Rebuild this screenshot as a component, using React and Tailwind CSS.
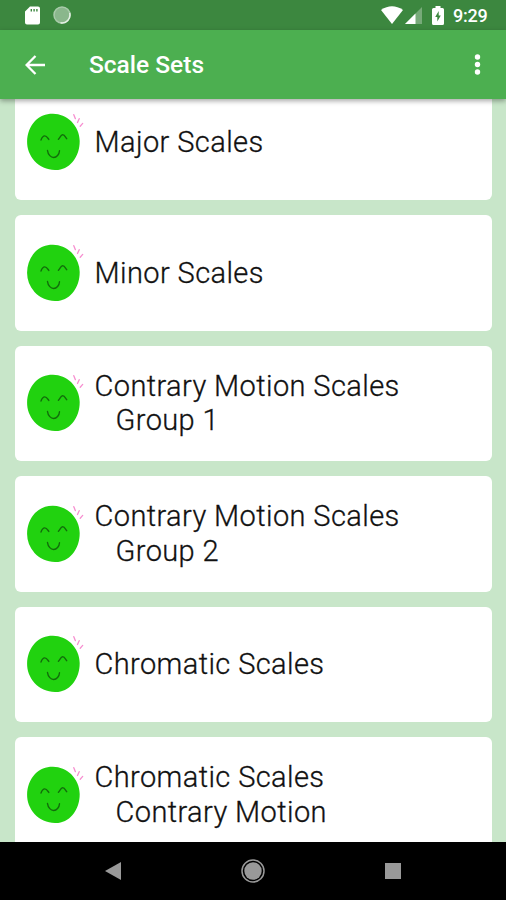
import React from "react";

const scaleSets = [
  { title: "Major Scales" },
  { title: "Minor Scales" },
  { title: "Contrary Motion Scales", subtitle: "Group 1" },
  { title: "Contrary Motion Scales", subtitle: "Group 2" },
  { title: "Chromatic Scales" },
  { title: "Chromatic Scales", subtitle: "Contrary Motion" },
];

const HappyFace = () => {
  return (
    <svg className="w-[60px] h-[60px] shrink-0" viewBox="0 0 60 60" fill="none">
      <path
        d="M27 1.700C34 1.800 40 4.500 45 9C50.500 14.500 53.600 21.500 53.700 29C53.700 37 51.500 44 46.500 50C42 55.500 36 58.200 29 58C21 57.800 13.500 54.500 8.500 49C3.500 43 1 36.500 1.100 29.500C1.200 22 3.800 14.500 9 9C14 4 20 1.600 27 1.700Z"
        fill="#21d20f"
      />
      <g stroke="#126c0b" strokeWidth="1.400" strokeLinecap="round" strokeLinejoin="round">
        <path d="M15 28C16 25.300 17.200 23.900 18.700 23.900C20.600 23.900 21.500 25.700 22.800 27.400" />
        <path d="M32.400 27.300C33.800 26 34.800 22.700 36.700 22.600C38.500 22.600 39.500 25 40.700 26.700" />
        <path d="M21.500 38.500C22 42.800 25 45.500 27.700 45.500C30.500 45.400 33.300 42.500 33.500 38.800" />
      </g>
      <g stroke="#f78fd0" strokeWidth="1.300" strokeLinecap="round">
        <path d="M47.800 2.700L49.400 6.700" />
        <path d="M53.200 6.700L51.500 10.500" />
        <path d="M56.700 11.400L54.200 14.200" />
      </g>
    </svg>
  );
};

const StatusBar = () => {
  return (
    <div className="flex h-[30px] items-center justify-between bg-[#3c873f] pl-[23px] pr-[18px]">
      <div className="flex items-center gap-[13px]">
        <svg className="w-[17px] h-[19px]" viewBox="0 0 17 19">
          <path
            fillRule="evenodd"
            d="M7 0.500H15Q17 0.500 17 2.500V16.500Q17 18.500 15 18.500H4Q2 18.500 2 16.500V5.500ZM7.600 3V5.600H9V3ZM10.400 3V5.600H11.800V3ZM13.200 3V5.600H14.600V3Z"
            fill="#fff"
          />
        </svg>
        <svg className="w-[18px] h-[18px]" viewBox="0 0 18 18" fill="none">
          <circle cx="9" cy="9" r="8" fill="#8ab78c" stroke="#a9cbaa" strokeWidth="1.500" />
          <path d="M16.700 7A8 8 0 0 1 7.500 16.800" stroke="#e5f0e5" strokeWidth="1.500" />
        </svg>
      </div>
      <div className="flex items-center">
        <svg className="w-[22px] h-[18px]" viewBox="0 0 22 18">
          <path d="M0 4Q11-3.500 22 4L11 18Z" fill="#fff" />
        </svg>
        <svg className="ml-[2px] w-[18px] h-[18px]" viewBox="0 0 18 18">
          <path d="M0 18L17 1V18Z" fill="#77aa79" />
          <path d="M0 18L10.500 7.500V18Z" fill="#fff" />
        </svg>
        <svg className="ml-[9px] w-3 h-[19px]" viewBox="0 0 12 19">
          <path d="M3.500 0H8.500V2H10.500Q12 2 12 3.500V17.500Q12 19 10.500 19H1.500Q0 19 0 17.500V3.500Q0 2 1.500 2H3.500Z" fill="#fff" />
          <path d="M6.700 5L3.200 11H5.300V15.500L8.800 9.500H6.700Z" fill="#3c873f" />
        </svg>
        <p className="ml-[9px] w-[35px] whitespace-nowrap pt-[2px] text-[18px] leading-[20px] font-medium tracking-[-0.2px] text-white">
          9:29
        </p>
      </div>
    </div>
  );
};

const AppBar = () => {
  return (
    <div className="relative z-10 flex h-[69px] items-center bg-[#4caf50] pl-[25px] pr-[25px] text-white shadow-[0_2px_5px_rgba(0,0,0,0.35)]">
      <svg className="w-5 h-5" viewBox="0 0 20 20" fill="none" stroke="currentColor" strokeWidth="2.300">
        <path d="M20 10H2M10.500 1L1.600 10L10.500 19" />
      </svg>
      <h1 className="ml-[44px] text-[24.500px] leading-[30px] font-medium">Scale Sets</h1>
      <svg className="ml-auto w-[7px] h-[21px]" viewBox="0 0 7 21" fill="currentColor">
        <circle cx="3.500" cy="3" r="2.700" />
        <circle cx="3.500" cy="10.500" r="2.700" />
        <circle cx="3.500" cy="18" r="2.700" />
      </svg>
    </div>
  );
};

const NavBar = () => {
  return (
    <div className="grid h-[58px] grid-cols-[140px_140px_140px] items-center justify-center justify-items-center bg-black">
      <svg className="w-4 h-[18px]" viewBox="0 0 16 18">
        <path d="M16 0V18L0 9Z" fill="#999" />
      </svg>
      <svg className="w-6 h-6" viewBox="0 0 24 24" fill="none">
        <circle cx="12" cy="12" r="11" stroke="#999" strokeWidth="1.500" />
        <circle cx="12" cy="12" r="8.700" fill="#999" />
      </svg>
      <div className="h-4 w-4 bg-[#999]"></div>
    </div>
  );
};

const App = () => {
  return (
    <div className="flex h-[900px] w-[506px] flex-col overflow-hidden bg-[#c8e6c9] font-[Roboto,sans-serif]">
      <StatusBar />
      <AppBar />
      <div className="min-h-0 flex-1 overflow-hidden">
        <div className="-mt-[14.5px] flex flex-col gap-[15px] pl-[15px] pr-[14px]">
          {scaleSets.map((item, index) => (
            <div
              className="flex h-[115.5px] shrink-0 items-center rounded-[6px] bg-white pl-[11px]"
              key={index}
            >
              <HappyFace />
              <div className="ml-[8.5px] text-[29px] leading-[34.5px] tracking-[0.4px] font-light text-[#111] [-webkit-text-stroke:0.3px_#111]">
                <p>{item.title}</p>
                {item.subtitle && <p className="pl-[21px]">{item.subtitle}</p>}
              </div>
            </div>
          ))}
        </div>
      </div>
      <NavBar />
    </div>
  );
};

export default App;
